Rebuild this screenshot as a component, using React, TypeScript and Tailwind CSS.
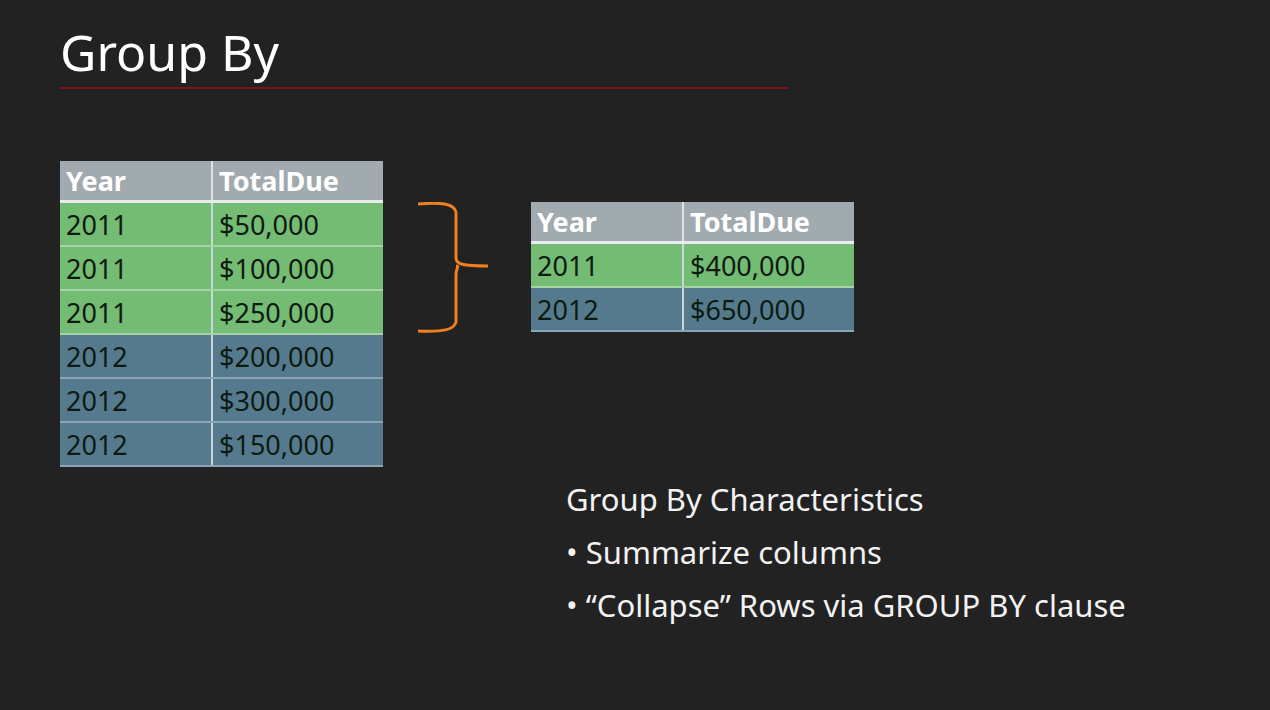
const left = [
  ["2011", "$50,000", "g"],
  ["2011", "$100,000", "g"],
  ["2011", "$250,000", "g"],
  ["2012", "$200,000", "b"],
  ["2012", "$300,000", "b"],
  ["2012", "$150,000", "b"],
];
const right = [
  ["2011", "$400,000", "g"],
  ["2012", "$650,000", "b"],
];

const Table = ({ rows }: { rows: string[][] }) => (
  <div className="w-[323px] text-[27px] leading-none">
    <div className="flex h-[42px] bg-[#a1aaae] text-white font-bold border-b-[3px] border-[#e8ecee]">
      <div className="w-[153px] pl-[6px] flex items-center border-r-2 border-[#dde2e4]">Year</div>
      <div className="flex-1 pl-[6px] flex items-center">TotalDue</div>
    </div>
    {rows.map((r, i) => (
      <div
        key={i}
        className={`flex h-[44px] text-[#0c1a10] border-b-2 ${
          r[2] === "g" ? "bg-[#74bb74] border-[#a6d3a6]" : "bg-[#557a8e] border-[#8aa6b5]"
        }`}
      >
        <div className="w-[153px] pl-[6px] flex items-center border-r-2 border-[#c9d6dc]">{r[0]}</div>
        <div className="flex-1 pl-[6px] flex items-center">{r[1]}</div>
      </div>
    ))}
  </div>
);

export default function App() {
  return (
    <div className="w-[1270px] h-[710px] bg-[#222222] text-white px-[60px] pt-[24px] font-['Lato',sans-serif]">
      <h1 className="text-[50px] leading-[56px] font-normal">Group By</h1>
      <div className="w-[728px] h-[2px] bg-[#7a1616] mt-[7px]" />
      <div className="flex mt-[72px]">
        <Table rows={left} />
        <div className="mt-[41px] ml-[35px] w-[113px]">
          <svg width="72" height="132" viewBox="0 0 72 132" fill="none" stroke="#f08020" strokeWidth="3">
            <path d="M0 2 C25 0 36 2 38 10 L38 56 C38 62 44 64 70 64 M38 64 C42 64 38 66 38 72 L38 120 C36 128 25 130 0 129" />
          </svg>
        </div>
        <div className="mt-[41px]">
          <Table rows={right} />
        </div>
      </div>
      <div className="ml-[506px] mt-[6px] text-[31px] leading-[53px] text-[#f2f2f2]">
        <div>Group By Characteristics</div>
        <div>• Summarize columns</div>
        <div>• “Collapse” Rows via GROUP BY clause</div>
      </div>
    </div>
  );
}
